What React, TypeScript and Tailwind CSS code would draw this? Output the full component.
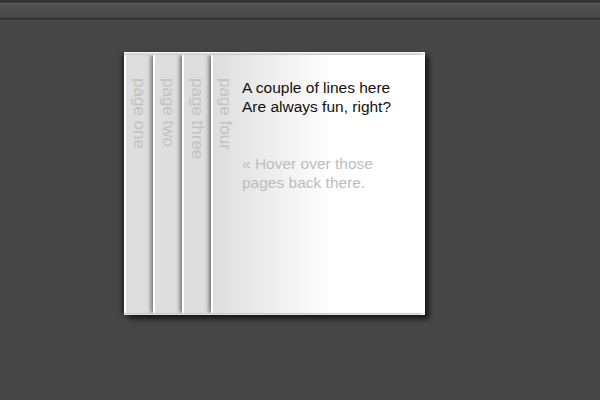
import React from 'react';

const pages = ['page one', 'page two', 'page three'];

const PageTab: React.FC<{ label: string }> = ({ label }) => (
  <div className="w-[29px] shrink-0 border-l-2 border-white bg-[#dedede] shadow-[-2px_0_4px_rgba(0,0,0,0.5)] flex justify-center pt-[23px]">
    <span className="[writing-mode:vertical-rl] text-[17px] leading-[17px] text-[#c2c2c2] whitespace-nowrap">{label}</span>
  </div>
);

const App: React.FC = () => {
  return (
    <div className="w-[600px] h-[400px] bg-[#464646] overflow-hidden font-['Liberation_Sans',Arial,sans-serif]">
      {/* top bar */}
      <div className="h-[2px] bg-[#333333]" />
      <div className="h-[1px] bg-[#3b3b3b]" />
      <div className="h-[1px] bg-[#5a5a5a]" />
      <div className="h-[14px] bg-gradient-to-b from-[#505050] to-[#474747]" />
      <div className="h-[1px] bg-[#2a2a2a]" />
      <div className="h-[1px] bg-[#3c3c3c]" />

      <div className="pt-[32px] pl-[124px]">
        <div className="w-[301px] h-[263px] bg-white pt-[3px] pb-[2px] flex shadow-[4px_4px_5px_rgba(0,0,0,0.65)]">
          {pages.map((p) => (
            <PageTab key={p} label={p} />
          ))}
          {/* front page */}
          <div className="flex-1 flex border-l-2 border-white bg-gradient-to-r from-[#dedede] to-white to-[120px] shadow-[-2px_0_4px_rgba(0,0,0,0.5)]">
            <div className="w-[24px] shrink-0 flex justify-center pt-[23px]">
              <span className="[writing-mode:vertical-rl] text-[17px] leading-[17px] text-[#c2c2c2] whitespace-nowrap">page four</span>
            </div>
            <div className="pl-[5px] pt-[23px] w-[170px] text-[15.5px] leading-[19px]">
              <p className="text-[#111111]">
                A couple of lines here
                <br />
                Are always fun, right?
              </p>
              <p className="mt-[38px] text-[#bdbdbd]">« Hover over those pages back there.</p>
            </div>
          </div>
        </div>
      </div>
    </div>
  );
};

export default App;
